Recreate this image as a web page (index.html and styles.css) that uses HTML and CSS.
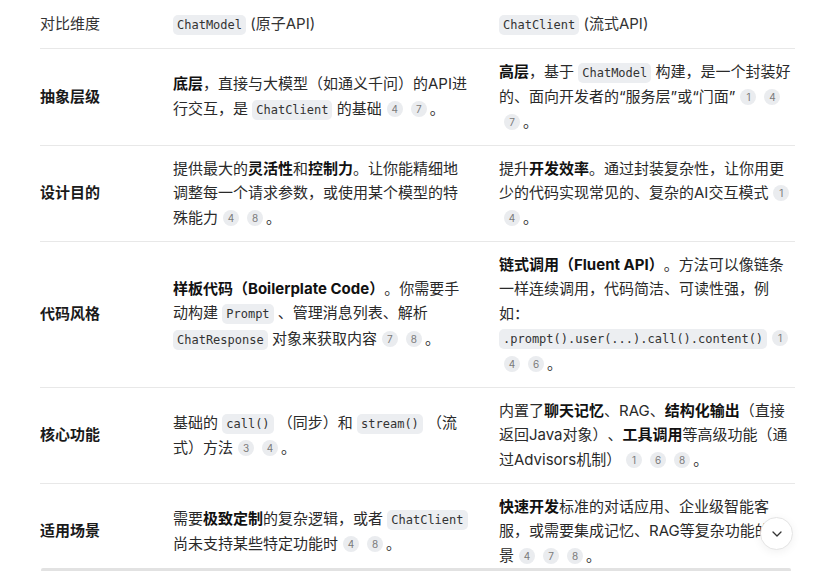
FILE: index.html
```html
<!DOCTYPE html>
<html lang="zh-CN">
<head>
<meta charset="utf-8">
<link rel="stylesheet" href="styles.css">
</head>
<body>
<div class="page">
  <table class="cmp">
    <colgroup>
      <col class="c1"><col class="c2"><col class="c3">
    </colgroup>
    <thead>
      <tr>
        <th>对比维度</th>
        <th><code>ChatModel</code> (原子API)</th>
        <th><code>ChatClient</code> (流式API)</th>
      </tr>
    </thead>
    <tbody>
      <tr>
        <td class="dim">抽象层级</td>
        <td><b>底层</b>，直接与大模型（如通义千问）的API进行交互，是 <code>ChatClient</code> 的基础<span class="ref">4</span><span class="ref">7</span>。</td>
        <td><b>高层</b>，基于 <code>ChatModel</code> 构建，是一个封装好的、面向开发者的“服务层”或“门面”<span class="ref">1</span><span class="ref">4</span><span class="ref">7</span>。</td>
      </tr>
      <tr>
        <td class="dim">设计目的</td>
        <td>提供最大的<b>灵活性</b>和<b>控制力</b>。让你能精细地调整每一个请求参数，或使用某个模型的特殊能力<span class="ref">4</span><span class="ref">8</span>。</td>
        <td>提升<b>开发效率</b>。通过封装复杂性，让你用更少的代码实现常见的、复杂的AI交互模式<span class="ref">1</span><span class="ref">4</span>。</td>
      </tr>
      <tr>
        <td class="dim">代码风格</td>
        <td><b>样板代码（Boilerplate Code）</b>。你需要手动构建 <code>Prompt</code> 、管理消息列表、解析 <code>ChatResponse</code> 对象来获取内容<span class="ref">7</span><span class="ref">8</span>。</td>
        <td><b>链式调用（Fluent API）</b>。方法可以像链条一样连续调用，代码简洁、可读性强，例如： <code>.prompt().user(...).call().content()</code><span class="ref">1</span><span class="ref">4</span><span class="ref">6</span>。</td>
      </tr>
      <tr>
        <td class="dim">核心功能</td>
        <td>基础的 <code>call()</code> （同步）和 <code>stream()</code> （流式）方法<span class="ref">3</span><span class="ref">4</span>。</td>
        <td>内置了<b>聊天记忆</b>、RAG、<b>结构化输出</b>（直接返回Java对象）、<b>工具调用</b>等高级功能（通过Advisors机制）<span class="ref">1</span><span class="ref">6</span><span class="ref">8</span>。</td>
      </tr>
      <tr>
        <td class="dim">适用场景</td>
        <td>需要<b>极致定制</b>的复杂逻辑，或者 <code>ChatClient</code> 尚未支持某些特定功能时<span class="ref">4</span><span class="ref">8</span>。</td>
        <td><b>快速开发</b>标准的对话应用、企业级智能客服，或需要集成记忆、RAG等复杂功能的场景<span class="ref">4</span><span class="ref">7</span><span class="ref">8</span>。</td>
      </tr>
    </tbody>
  </table>
  <div class="scrollbar"></div>
  <button class="scroll-down" aria-label="向下滚动">
    <svg width="12" height="8" viewBox="0 0 12 8"><path d="M2 2 L6 6 L10 2" fill="none" stroke="#333" stroke-width="1.3" stroke-linecap="round" stroke-linejoin="round"/></svg>
  </button>
</div>
</body>
</html>
```

FILE: styles.css
```css
html, body {
  margin: 0;
  padding: 0;
  background: #ffffff;
}

body {
  font-family: Inter, "Noto Sans CJK SC", sans-serif;
  font-size: 15px;
  color: #2a2a2a;
}

.page {
  position: relative;
  width: 836px;
  height: 571px;
  overflow: hidden;
  padding: 1px 0 0 40px;
  box-sizing: border-box;
}

.cmp {
  border-collapse: collapse;
  table-layout: fixed;
  width: 755px;
  line-height: 24.5px;
  text-spacing-trim: space-all;
}

.c1 { width: 133px; }
.c2 { width: 326px; }
.c3 { width: 296px; }

.cmp th,
.cmp td {
  text-align: left;
  vertical-align: middle;
  padding: 10.75px 28px 10.75px 0;
  border-bottom: 1px solid #e8e8e8;
}

.cmp th {
  font-weight: 400;
  color: #333;
}

.cmp th:last-child,
.cmp td:last-child {
  padding-right: 0;
}

.cmp td.dim {
  font-weight: 700;
  color: #1a1a1a;
}

.cmp b {
  font-weight: 700;
  color: #111;
}

.cmp code {
  font-family: "DejaVu Sans Mono", monospace;
  font-size: 12px;
  background: #eceef1;
  color: #333;
  border-radius: 5px;
  padding: 3px 4px;
}

.ref {
  display: inline-flex;
  align-items: center;
  justify-content: center;
  width: 16px;
  height: 16px;
  border-radius: 50%;
  background: #eaecef;
  color: #7a7a7a;
  font-family: Inter, sans-serif;
  font-size: 10px;
  line-height: 1;
  margin: 0 3px 0 5px;
  vertical-align: 1px;
}

.scrollbar {
  position: absolute;
  left: 41px;
  top: 568px;
  width: 750px;
  height: 4px;
  border-radius: 2px;
  background: #e2e2e2;
}

.scroll-down {
  position: absolute;
  left: 760px;
  top: 517px;
  width: 33px;
  height: 33px;
  padding: 0;
  border-radius: 50%;
  border: 1px solid #e4e4e4;
  background: #fff;
  box-shadow: 0 2px 10px rgba(0, 0, 0, 0.06);
  display: flex;
  align-items: center;
  justify-content: center;
}
```
